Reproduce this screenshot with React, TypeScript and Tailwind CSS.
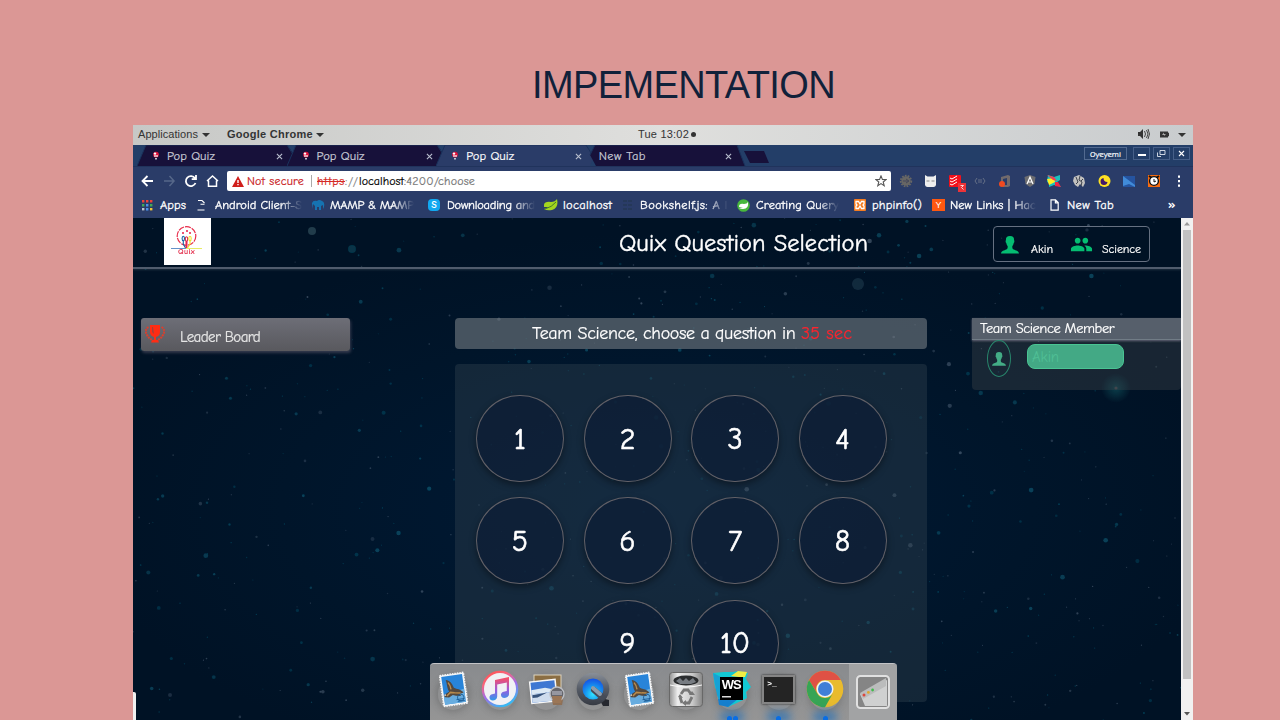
import { useLayoutEffect, useRef, useState } from "react";
import type { ReactNode } from "react";
import { MdGroup } from "react-icons/md";

/* Text set to an exact advance width by distributing letter spacing. */
function Fit({ w, children, className = "" }: { w: number; children: string; className?: string }) {
  const ref = useRef<HTMLSpanElement>(null);
  const [spacing, setSpacing] = useState(0);
  useLayoutEffect(() => {
    if (ref.current) {
      const natural = ref.current.getBoundingClientRect().width;
      setSpacing((w - natural) / children.length);
    }
  }, [w, children]);
  return (
    <span ref={ref} className={`inline-block shrink-0 whitespace-pre ${className}`} style={{ letterSpacing: spacing }}>
      {children}
    </span>
  );
}

const comic = "font-['Comic_Neue','Comic_Sans_MS',Lato,sans-serif]";

function Balloon() {
  return (
    <svg width="8" height="10" viewBox="0 0 8 10" className="block">
      <circle cx="4" cy="3.6" r="2.9" fill="#d9123c" />
      <circle cx="3" cy="2.6" r="1.2" fill="#fff" />
      <path d="M2 4.4h4v1.2H2z" fill="#fff" />
      <path d="M3.2 7h1.6v1.6H3.2z" fill="#e8e8f0" />
    </svg>
  );
}

function Tab({ title, w, active, blank }: { title: string; w: number; active?: boolean; blank?: boolean }) {
  return (
    <div className="relative h-[21px] w-[149.6px] shrink-0">
      <svg width="162" height="21" viewBox="0 0 162 21" className="absolute left-0 top-0">
        {blank ? (
          <path d="M9 0H151L159 21H10L4 10Z" fill="#17113a" />
        ) : (
          <path d="M0 21L9 0H150L158 11L154 21Z" fill={active ? "#2a3c68" : "#17113a"} />
        )}
        <path d={blank ? "M4 10L9 0H151L159 21" : "M0 21L9 0H150L157 11"} fill="none" stroke="#1a315b" />
      </svg>
      <div className={`relative flex h-[21px] items-center ${blank ? "pl-[13px]" : "pl-[15px]"}`}>
        {!blank && <div className="w-[15px]"><Balloon /></div>}
        <Fit w={w} className={`text-[12.5px] leading-[20px] [-webkit-text-stroke:0.2px_currentColor] ${active ? "text-white" : "text-[#c9cbd6]"}`}>{title}</Fit>
        <svg width="7" height="7" viewBox="0 0 7 7" className="absolute left-[139px] top-[8px]">
          <path d="M.9 .9L6.1 6.1M6.1 .9L.9 6.1" stroke="#b8bfce" strokeWidth="1.1" />
        </svg>
      </div>
    </div>
  );
}

function Mark({ width, iconWidth, icon, text, w, fade }: { width: string; iconWidth: string; icon: ReactNode; text: string; w: number; fade?: boolean }) {
  return (
    <div className={`flex h-[24px] shrink-0 items-center ${width}`}>
      <div className={`shrink-0 ${iconWidth}`}>{icon}</div>
      <Fit w={w} className={`text-[12.5px] leading-[24px] text-white [-webkit-text-stroke:0.3px_white] ${fade ? "mask-r-from-75% mask-r-to-100%" : ""}`}>{text}</Fit>
    </div>
  );
}

const Doc = () => (
  <svg width="9" height="12" viewBox="0 0 9 12"><path d="M1 .8h4.5L8.2 3.6v7.6H1zM5.4 .8v3h2.8" fill="none" stroke="#fff" strokeWidth="1.2" /></svg>
);

function Person({ size, color }: { size: number; color: string }) {
  return (
    <svg width={size} height={size} viewBox="0 0 18 18" className="block shrink-0">
      <path d="M9 0C6 0 4.8 1.4 4.9 4.2C4.4 4.5 4.5 6.5 5.3 6.9C5.6 8.6 6.3 9.6 6.7 10.2C6.7 12 6.5 13 5.3 13.6C3.2 14.6 .5 14.6 0 17.6H18C17.5 14.6 14.8 14.6 12.7 13.6C11.5 13 11.3 12 11.3 10.2C11.7 9.6 12.4 8.6 12.7 6.9C13.5 6.5 13.6 4.5 13.1 4.2C13.2 1.4 12 0 9 0Z" fill={color} />
    </svg>
  );
}

function makeStars() {
  let seed = 71;
  const next = () => {
    seed = (seed * 16807) % 2147483647;
    return seed / 2147483647;
  };
  return Array.from({ length: 700 }, () => ({
    x: next() * 1048, y: next() * 502, r: 0.6 + Math.pow(next(), 4) * 1.8, o: 0.18 + next() * 0.22, c: next() > 0.4 ? "#158aa5" : "#8194a8",
  }));
}
const stars = makeStars();

function Sky() {
  return (
    <svg width="1048" height="502" viewBox="0 0 1048 502" className="absolute left-0 top-0">
      <defs>
        <radialGradient id="sky" cx=".5" cy=".58" r=".55">
          <stop offset="0" stopColor="#001a36" /><stop offset=".65" stopColor="#00152a" /><stop offset="1" stopColor="#001225" />
        </radialGradient>
        <radialGradient id="flare"><stop stopColor="#1d8f8f" stopOpacity=".35" /><stop offset="1" stopColor="#1d8f8f" stopOpacity="0" /></radialGradient>
        <filter id="soft"><feGaussianBlur stdDeviation=".7" /></filter>
      </defs>
      <rect width="1048" height="502" fill="url(#sky)" />
      <g filter="url(#soft)">
        {stars.map((s, i) => <circle key={i} cx={s.x} cy={s.y} r={s.r} fill={s.c} opacity={s.o} />)}
        <circle cx="725" cy="66" r="6" fill="#3d6074" opacity=".3" />
        <circle cx="179" cy="13" r="4" fill="#426672" opacity=".5" />
        <circle cx="219" cy="31" r="4" fill="#12758a" opacity=".35" />
      </g>
      <circle cx="983" cy="170" r="15" fill="url(#flare)" />
      <circle cx="983" cy="170" r="1.6" fill="#a06060" opacity=".4" />
    </svg>
  );
}

function Circle({ n }: { n: number }) {
  return (
    <div className="flex h-[87px] w-[88px] items-center justify-center rounded-full border border-[#716c70]/85 bg-[#0d1e36]/80 pt-[2px] text-[30px] leading-[30px] text-white shadow-[0_3px_7px_rgba(0,0,0,0.4)] [-webkit-text-stroke:0.6px_white]">
      {n}
    </div>
  );
}

function Stamp() {
  return (
    <svg width="36" height="40" viewBox="0 0 36 40">
      <g transform="rotate(-8 18 20)">
        <rect x="6.5" y="5" width="24" height="31" fill="#f5f6f7" stroke="#f5f6f7" strokeWidth="1.6" strokeDasharray="1.5 1" />
        <rect x="8" y="6.5" width="21" height="28" fill="#2884d9" />
        <path d="M8 26L29 21V34.5H8Z" fill="#67acdf" />
        <path d="M12 10C16 11 18 14 19 19C22 21 25 21 28 25L24 26L25 28L20 27L17 26L13 28L9 27L8 25L12 23L14 22C12 19 13 14 12 10Z" fill="#54483e" />
        <path d="M14 13C16 16 16 18 16 20M11 26L15 23L19 24L25 25" fill="none" stroke="#b98b4c" strokeWidth="1.5" />
        <path d="M8 25l2-1v2z" fill="#eee" />
        <circle cx="24.5" cy="29.5" r="3.3" fill="none" stroke="#165994" strokeWidth=".8" />
        <path d="M20 31h8m-7 2h7" stroke="#165994" strokeWidth=".8" />
      </g>
    </svg>
  );
}

function Music() {
  return (
    <svg width="38" height="38" viewBox="0 0 38 38">
      <defs>
        <linearGradient id="ring" x1=".2" y1="0" x2=".7" y2="1"><stop stopColor="#ff504d" /><stop offset=".25" stopColor="#f9657d" /><stop offset=".55" stopColor="#a16be9" /><stop offset="1" stopColor="#28c4f4" /></linearGradient>
        <linearGradient id="note" x1="0" y1="0" x2="0" y2="1"><stop stopColor="#ff4e5d" /><stop offset=".55" stopColor="#9b5bdd" /><stop offset="1" stopColor="#2e9bea" /></linearGradient>
      </defs>
      <circle cx="19" cy="19" r="18.3" fill="url(#ring)" /><circle cx="19" cy="19" r="16" fill="#f1f1f5" />
      <path d="M14 10L28 7V24C28 28.5 20 29.5 20 25C20 22 23 21.5 25.8 21V12.5L16.2 14.5V26.5C16.2 31 8.5 32 8.5 27.5C8.5 24.5 11.5 24 14 23.5Z" fill="url(#note)" />
    </svg>
  );
}

function Preview() {
  return (
    <svg width="38" height="38" viewBox="0 0 38 38">
      <rect x="7" y="5" width="27" height="22" fill="#8b6e43" stroke="#ddd3bd" />
      <g transform="rotate(-6 16 22)">
        <rect x="3" y="10" width="27" height="23" fill="#f7f7f7" />
        <rect x="4.5" y="11.5" width="24" height="20" fill="#3e77d2" />
        <path d="M4.5 23h24v8.5h-24z" fill="#cedced" />
        <path d="M4.5 19l14-1 10 3v2h-24z" fill="#dce9f4" /><path d="M5 24l15-1-10 4H5z" fill="#37537b" />
      </g>
      <path d="M24 24h13l-2 11h-9z" fill="#8f7056" /><circle cx="30" cy="24" r="7" fill="#66666c" stroke="#bbbec3" strokeWidth="1.4" />
      <path d="M25 26h10l-1 7h-8z" fill="#9b7656" /><path d="M25 21h10v4H25z" fill="#9697a0" />
    </svg>
  );
}

function Quick() {
  return (
    <svg width="38" height="38" viewBox="0 0 38 38">
      <defs>
        <radialGradient id="qt" cx=".5" cy=".75" r=".7"><stop stopColor="#32e4ff" /><stop offset=".5" stopColor="#179af0" /><stop offset="1" stopColor="#1558e5" /></radialGradient>
        <linearGradient id="qr" x1="0" y1="0" x2="0" y2="1"><stop stopColor="#8a9099" /><stop offset=".5" stopColor="#555b66" /><stop offset="1" stopColor="#363a43" /></linearGradient>
      </defs>
      <path d="M24 27L35 30V36H29Z" fill="#26282f" />
      <circle cx="19" cy="19" r="16.3" fill="url(#qr)" />
      <circle cx="19" cy="19" r="10.5" fill="url(#qt)" /><path d="M20 20L28 27" stroke="#454b57" strokeWidth="6" strokeLinecap="round" />
      <path d="M19 18L26 24" stroke="#8d9cab" strokeWidth="4" strokeLinecap="round" />
    </svg>
  );
}

function Trash() {
  return (
    <svg width="38" height="38" viewBox="0 0 38 38">
      <defs><linearGradient id="bin"><stop stopColor="#929292" /><stop offset=".25" stopColor="#eeeeee" /><stop offset=".7" stopColor="#c8c8c8" /><stop offset="1" stopColor="#858585" /></linearGradient></defs>
      <rect x="2.5" y="2.5" width="33" height="34" rx="3" fill="url(#bin)" stroke="#686868" />
      <ellipse cx="19" cy="10.5" rx="12.5" ry="5" fill="#2b2d2f" /><path d="M9 11l4-3 3 3 3-3 3 3 4-3 3 4-5 2h-11z" fill="#777c82" />
      <path d="M3 15Q19 19 35 15" stroke="#f8f8f8" fill="none" />
      <g fill="none" stroke="#777" strokeWidth="2.8"><path d="M14 24l3-4h4l3 4M25 27l-3 6h-4M15 33l-2-6" /></g><path d="M22 25h6l-3-4zM19 30v6l-4-3zM11 27l5 1-3-4z" fill="#777" />
    </svg>
  );
}

function WebStorm() {
  return (
    <div className="relative h-[40px] w-[38px]">
      <svg width="38" height="40" viewBox="0 0 38 40" className="absolute">
        <path d="M0 4L11 3L20 3L25 2L35 4L33 10L38 18L33 23L34 29L28 32L15 38L7 34L5 25L2 18Z" fill="#12c9d3" />
        <path d="M0 4L8 8L7 35L4 26Z" fill="#17a1d4" /><path d="M18 7L25 2L34 3L32 8L26 8Z" fill="#f0ec43" /><path d="M5 30h20l-10 8-9-2z" fill="#167fce" />
        <path d="M7 8h23v23H7z" /><path d="M9 27h9v1.4H9z" fill="#ddd" />
      </svg>
      <span className="absolute left-[8.5px] top-[9px] font-['Liberation_Sans',sans-serif] text-[13px] leading-[14px] font-bold tracking-[-1px] text-white">WS</span>
    </div>
  );
}

function ChromeLogo() {
  return (
    <svg width="38" height="38" viewBox="0 0 38 38">
      <circle cx="19" cy="19" r="18.3" fill="#e9bb2d" />
      <path d="M3.1 10A18.3 18.3 0 0134.9 10H19A9 9 0 0011.2 23.5Z" fill="#df5145" />
      <path d="M3.1 10L11.2 23.5A9 9 0 0026.8 23.5L19 37.3A18.3 18.3 0 013.1 10Z" fill="#36a455" />
      <circle cx="19" cy="19" r="8.5" fill="#eef2f4" /><circle cx="19" cy="19" r="7" fill="#407fd7" />
    </svg>
  );
}

function Terminal() {
  return (
    <div className="relative h-[29px] w-[33px] border-2 border-[#858585] bg-[#242424] shadow-[0_0_2px_#222]">
      <span className="absolute left-[3px] top-[2px] font-['Liberation_Mono',monospace] text-[8px] leading-[9px] font-bold text-white">&gt;_</span>
    </div>
  );
}

function WindowIcon() {
  return (
    <svg width="34" height="34" viewBox="0 0 34 34">
      <rect x="1" y="1" width="32" height="32" rx="3.5" fill="#858585" stroke="#e1e1e1" strokeWidth="2" />
      <path d="M4 19L31 5V31H9Z" fill="#cfd0d0" /><path d="M4 18L30 3V11L7 24Z" fill="#bbbcbc" />
      <circle cx="8" cy="20" r="1.5" fill="#dc493d" /><circle cx="12.4" cy="17.4" r="1.4" fill="#dea82e" /><circle cx="16.6" cy="15" r="1.4" fill="#40bb4d" />
    </svg>
  );
}

function DockItem({ children, dots = 0, last }: { children: ReactNode; dots?: number; last?: boolean }) {
  return (
    <div className={`relative flex h-[56px] shrink-0 items-start justify-center pt-[5px] ${last ? "w-[48px] bg-[#a2a3a4]" : "w-[46.5px]"}`}>
      {!last && <div className="absolute bottom-[10px] left-[8px] h-[32px] w-[30px] rounded-full shadow-[0_0_7px_2px_rgba(65,65,65,0.3)]" />}
      <div className="relative flex h-[40px] items-center">{children}</div>
      {dots > 0 && (
        <div className="absolute bottom-[-1px] left-0 flex w-full justify-center gap-px">
          <div className="absolute bottom-[-1px] h-[10px] w-[24px] rounded-full bg-[#196dbe]/70 blur-[4px]" />
          {Array.from({ length: dots }, (_, i) => <div key={i} className="relative h-[5px] w-[5px] rounded-t-full bg-[#086de4]" />)}
        </div>
      )}
    </div>
  );
}

function ExtensionIcons() {
  return (
    <svg width="298" height="24" viewBox="0 0 298 24" className="shrink-0">
      <g transform="translate(12 12)"><circle r="4.7" fill="#676664" /><circle r="5.3" fill="none" stroke="#686765" strokeWidth="1.8" strokeDasharray="1.7 1.2" /><path d="M-3 0h5M0-2l3 2-3 2" stroke="#44475a" fill="none" /></g>
      <g transform="translate(36.5 12)"><path d="M-5.5-6L-3-4.5H3L5.5-6V4Q5 6 3 6H-3Q-5 6-5.5 4Z" fill="#eee" /><path d="M-4-1h3v2h-3zM1-1h3v2H1z" fill="#bbb" /></g>
      <g transform="translate(61 12)"><rect x="-6" y="-6" width="12" height="12" rx="1" fill="#f3101b" /><path d="M-5-3l2 1 5-3M-5 0l2 1 5-3M-5 3l2 1 5-3" stroke="#fff" fill="none" /><path d="M3 2h8v9H3z" fill="#ec3338" /><path d="M5.5 4.5h3l-2 2 2 2" stroke="#ffd2d2" fill="none" /></g>
      <g transform="translate(86 12)" stroke="#646f86" fill="none"><path d="M-3-3L-5 0L-3 3M3-3L5 0L3 3M-2-1h4M-2 1h4" /></g>
      <g transform="translate(111 12)"><path d="M-4-4L3-6L5-5V5L3 6H-2V4H2V-3L-2-2V2H-4Z" fill="#716a6c" /><circle cx="-3" cy="3" r="3" fill="#f14a20" /></g>
      <g transform="translate(136 12)"><path d="M0-6L5.5-4L4.5 3L0 6L-4.5 3L-5.5-4Z" fill="#6d6d70" /><path d="M-3 3L0-4L3 3M-2 1h4" stroke="#fff" strokeWidth="1.2" fill="none" /></g>
      <g transform="translate(160 12)"><path d="M-6-6L0-4L6-6V-1L3 1L7 6L0 4L-5 6V2L-7 1Z" fill="#1ac0bd" /><path d="M-7-2L0-3L1 1L-5 4Z" fill="#ffed23" /><path d="M-7-6L0-4L3 0L-1-1Z" fill="#ef4054" /><path d="M1 1L4 1L7 6L1 5Z" fill="#ef2544" /></g>
      <g transform="translate(185 12)"><path d="M-5-4L0-6L5-3L6 2L4 6L1 3L-1 6L-4 4L-6 0Z" fill="#c2c1bf" /><path d="M-3-4L-1 1L-3 3M1-5l-1 4 3 2-1 4M4-2L2 0" stroke="#3d424d" strokeWidth="1" fill="none" /></g>
      <g transform="translate(210.5 12)"><circle r="6" fill="#ffe123" /><path d="M-1-3A3.5 3.5 0 103 1A4 4 0 01-1-3" fill="#421a68" /></g>
      <g transform="translate(235 12)"><path d="M-6-5H6V6H-6Z" fill="#2554a0" /><path d="M-6-5L6 4V6L0 3L-6 5Z" fill="#418bd8" /></g>
      <g transform="translate(260 12)"><path d="M-6-6H6V6H-6Z" fill="#f66b0e" /><path d="M-5-5L-2-3M5-5L2-3" stroke="#111" strokeWidth="2" /><circle r="4.4" fill="#fff" stroke="#111" strokeWidth="1.4" /><path d="M0-2V1L2 0" stroke="#111" fill="none" /></g>
      <path d="M284 6.5h2v2.2h-2zm0 4.5h2v2.2h-2zm0 4.5h2v2.2h-2z" fill="#fff" />
    </svg>
  );
}

function Chrome() {
  return (
    <>
      <div className="relative flex h-[21px] shrink-0 bg-[#233e68] pl-[4px]">
        <Tab title="Pop Quiz" w={48} />
        <Tab title="Pop Quiz" w={48} />
        <Tab title="Pop Quiz" w={48} active />
        <Tab title="New Tab" w={47} blank />
        <svg width="28" height="14" viewBox="0 0 28 14" className="ml-[8px] mt-[5px] shrink-0"><path d="M1 1H21L26 13H7Z" fill="#17113a" /></svg>
        <div className="ml-auto flex gap-[6px] pr-[3px] pt-[2px]">
          <div className="flex h-[13px] w-[43px] items-center justify-center border border-[#526a90] text-white"><Fit w={31} className="text-[8.5px] leading-[10px] [-webkit-text-stroke:0.2px_white]">Oyeyemi</Fit></div>
          <div className="flex h-[13px] w-[17px] items-center justify-center border border-[#465f88]"><div className="mt-[3px] h-[2px] w-[8px] bg-white" /></div>
          <div className="ml-[-3px] flex h-[13px] w-[17px] items-center justify-center border border-[#465f88]"><svg width="9" height="7" viewBox="0 0 9 7"><path d="M3 .5h5v4H3zM.5 2.5v4h3.5" fill="none" stroke="#dfe5ef" strokeWidth=".9" /></svg></div>
          <div className="ml-[-3px] flex h-[13px] w-[17px] items-center justify-center border border-[#465f88]"><svg width="7" height="7" viewBox="0 0 7 7"><path d="M1 1L6 6M6 1L1 6" stroke="#fff" strokeWidth="1.1" /></svg></div>
        </div>
      </div>
      <div className="flex h-[27px] shrink-0 items-center border-t border-[#20335c] bg-[#2a3c68] pt-[2px]">
        <svg width="94" height="20" viewBox="0 0 94 20" className="shrink-0" fill="none" stroke="#fff" strokeWidth="1.8">
          <path d="M20 10H10M14.5 5L9.5 10L14.5 15" />
          <path d="M31 10H41M36.5 5L41 10L36.5 15" stroke="#566789" strokeWidth="1.5" />
          <path d="M62 7.2A5 5 0 1062.5 12M63 4V8.2H58.7" />
          <path d="M74 10L79.5 5L85 10M75.5 9.5V15.3H83.5V9.5" strokeWidth="1.5" />
        </svg>
        <div className="flex h-[20px] w-[664px] shrink-0 items-center rounded-[2px] bg-white pl-[5px] text-[12px] leading-[19px] [-webkit-text-stroke:0.2px_currentColor]">
          <svg width="12" height="11" viewBox="0 0 12 11" className="mr-[3px] shrink-0"><path d="M6 0L12 11H0Z" fill="#d01e1b" /><path d="M5.3 4h1.4v3H5.3zm0 4h1.4v1.3H5.3z" fill="#fff" /></svg>
          <Fit w={57} className="text-[#c9211e]">Not secure</Fit>
          <div className="ml-[7px] mr-[5px] h-[12px] w-px bg-[#aaa]" />
          <Fit w={28} className="text-[#d52a25] line-through decoration-1">https</Fit>
          <Fit w={14} className="text-[#888]">://</Fit>
          <Fit w={45} className="text-black">localhost</Fit>
          <Fit w={71} className="text-[#777]">:4200/choose</Fit>
          <svg width="12" height="12" viewBox="0 0 12 12" className="ml-auto mr-[4px]"><path d="M6 .9L7.4 4.4L11.1 4.6L8.2 7L9.2 10.7L6 8.6L2.8 10.7L3.8 7L.9 4.6L4.6 4.4Z" fill="none" stroke="#555" strokeWidth="1.1" /></svg>
        </div>
        <div className="ml-[3px] flex"><ExtensionIcons /></div>
      </div>
      <div className="flex h-[25px] shrink-0 overflow-hidden bg-[#2a3c68] pl-[9px]">
        <Mark width="w-[55px]" iconWidth="w-[18px]" text="Apps" w={26} icon={<svg width="11" height="11" viewBox="0 0 11 11"><path d="M0 0h2.4v2.4H0zM4 0h2.4v2.4H4zM8 0h2.4v2.4H8z" fill="#f04239" /><path d="M0 4h2.4v2.4H0zM8 4h2.4v2.4H8z" fill="#41a858" /><path d="M4 4h2.4v2.4H4zM4 8h2.4v2.4H4z" fill="#4d91eb" /><path d="M0 8h2.4v2.4H0z" fill="#bbc3cd" /><path d="M8 8h2.4v2.4H8z" fill="#f1c338" /></svg>} />
        <Mark width="w-[115px]" iconWidth="w-[18px]" text="Android Client-S" w={87} fade icon={<svg width="9" height="12" viewBox="0 0 9 12"><path d="M1 1.5h4l2.5 2.5M3.5 5.2H7.5M.5 11H7.5" fill="none" stroke="#fff" strokeWidth="1.1" /></svg>} />
        <Mark width="w-[116px]" iconWidth="w-[18px]" text="MAMP & MAMP" w={84} fade icon={<svg width="13" height="12" viewBox="0 0 13 12"><path d="M0 10V4Q1 1 5 2Q7 0 10 2Q13 3 12 8L11 10V6L9 7V11H7V8H5V11H3V7L1 5Z" fill="#1673b1" /></svg>} />
        <Mark width="w-[116px]" iconWidth="w-[19px]" text="Downloading and" w={88} fade icon={<div className="flex h-[12px] w-[12px] items-center justify-center rounded-[4px] bg-[#11a9f1] text-[10px] leading-[12px] font-black text-white">S</div>} />
        <Mark width="w-[79px]" iconWidth="w-[19px]" text="localhost" w={49} icon={<svg width="14" height="12" viewBox="0 0 14 12"><path d="M0 8Q-1 2 7 3Q11 3 13 0Q15 9 8 11Q3 12 0 10L5 8Z" fill="#a2d51f" /><path d="M1 10Q8 8 12 3" stroke="#447b29" fill="none" /></svg>} />
        <Mark width="w-[114px]" iconWidth="w-[17px]" text="Bookshelf.js: A l" w={88} fade icon={<svg width="9" height="10" viewBox="0 0 9 10"><path d="M0 1h4M5 1h4M0 5h4M5 5h4M0 9h4M5 9h4" stroke="#253859" strokeWidth="2" /></svg>} />
        <Mark width="w-[117px]" iconWidth="w-[19px]" text="Creating Query" w={83} fade icon={<svg width="13" height="13" viewBox="0 0 13 13"><circle cx="6.5" cy="6.5" r="6.3" fill="#48b83d" /><path d="M2 8Q2 4 7 5Q10 5 11 3Q12 10 6 10Q4 10 2 9L6 8Z" fill="#fff" /></svg>} />
        <Mark width="w-[78px]" iconWidth="w-[18px]" text="phpinfo()" w={50} icon={<svg width="12" height="12" viewBox="0 0 12 12"><rect width="12" height="12" rx="1" fill="#f47c20" /><path d="M2 2.5H4.5L6 5L7.5 2.5H10V5L9 6L10 7V9.5H7.5L6 7L4.5 9.5H2V7L3 6L2 5Z" fill="none" stroke="#fff" strokeWidth="1.3" /></svg>} />
        <Mark width="w-[118px]" iconWidth="w-[18px]" text="New Links | Hac" w={86} fade icon={<div className="h-[12px] w-[13px] bg-[#ff5810] text-center font-['Liberation_Sans',sans-serif] text-[9px] leading-[12px] text-white">Y</div>} />
        <Mark width="w-[122px]" iconWidth="w-[17px]" text="New Tab" w={47} icon={<Doc />} />
        <span className="ml-[-4px] text-[13px] leading-[23px] font-bold text-white">»</span>
      </div>
    </>
  );
}

export default function App() {
  return (
    <main className={`flex h-[720px] w-[1280px] flex-col overflow-hidden bg-[#db9795] pl-[133px] ${comic}`}>
      <h1 className="h-[125px] shrink-0 pl-[399px] pt-[63px] font-['Liberation_Sans',Arial,sans-serif] text-[38px] leading-[44px] text-[#11213a]"><Fit w={303}>IMPEMENTATION</Fit></h1>
      <div className="relative flex h-[595px] w-[1060px] shrink-0 flex-col overflow-hidden">
        <div className="grid h-[20px] shrink-0 grid-cols-3 items-center bg-linear-to-r from-[#c7c8c6] via-[#dfdfdd] to-[#c9ccce] px-[5px] pb-[2px] font-['Liberation_Sans',sans-serif] text-[11px] leading-[18px] text-[#343434]">
          <div className="flex items-center">
            <Fit w={60}>Applications</Fit><svg width="8" height="5" viewBox="0 0 8 5" className="ml-[4px] mr-[17px] mt-[2px]"><path d="M0 0h8L4 4z" fill="#333" /></svg>
            <Fit w={86} className="font-bold">Google Chrome</Fit><svg width="8" height="5" viewBox="0 0 8 5" className="ml-[3px] mt-[2px]"><path d="M0 0h8L4 4z" fill="#333" /></svg>
          </div>
          <div className="flex items-center justify-center pl-[8px]"><Fit w={51}>Tue 13:02</Fit><div className="ml-[2px] h-[5px] w-[5px] rounded-full bg-[#333]" /></div>
          <svg width="52" height="14" viewBox="0 0 52 14" className="ml-auto"><path d="M2 5h2l3-3v10L4 9H2z" fill="#333" /><path d="M8.5 4q2 3 0 6M10.5 3q3 4 0 8M12 2q3 5 0 10" stroke="#444" fill="none" /><path d="M24 4.5h8v1.2h1v3.6h-1v1.2h-8z" fill="#333" /><path d="M28 5.5L26 8h2v1L30 7H28z" fill="#aaa" /><path d="M42 6h8l-4 4z" fill="#333" /></svg>
        </div>
        <Chrome />
        <div className="flex h-[502px] shrink-0">
          <div className="relative h-[502px] w-[1048px] overflow-hidden">
            <Sky />
            <div className="relative flex h-[502px] flex-col">
              <header className="flex h-[51px] shrink-0 items-start border-b-2 border-[#505c6d] pl-[31px] shadow-[0_1px_2px_rgba(100,115,130,0.3)]">
                <div className="relative h-[47px] w-[47px] bg-white">
                  <svg width="47" height="47" viewBox="0 0 47 47" className="absolute"><circle cx="22.5" cy="18" r="9.3" fill="none" stroke="#e82d4b" strokeWidth="1.2" strokeDasharray="6 1" /><g fill="none" strokeWidth="1.1"><ellipse cx="19.3" cy="20.5" rx="1.2" ry="2.2" stroke="#1765a6" /><path d="M19.3 23V26L21.5 30" stroke="#1765a6" /><ellipse cx="22.5" cy="21" rx="1.2" ry="2.2" stroke="#da2848" /><path d="M22.5 23V31" stroke="#e5234f" strokeWidth="2" /><ellipse cx="26" cy="20.5" rx="1.2" ry="2.2" stroke="#efe229" /><path d="M26 23V26L23.5 30" stroke="#efe229" /></g><path d="M18 15h2m2-2h2m1 2h2" stroke="#e71d46" strokeWidth="1.3" /><path d="M7 30.5H22" stroke="#6592c9" /><path d="M22 30.5H38" stroke="#e7ec67" /></svg>
                  <span className="absolute left-[14px] top-[29.5px] text-[8px] leading-[8px] font-bold text-[#e22645]"><Fit w={17}>Quix</Fit></span>
                </div>
                <h2 className="ml-[408px] mt-[9px] text-[24.5px] leading-[33px] text-white [-webkit-text-stroke:0.4px_white]"><Fit w={249}>Quix Question Selection</Fit></h2>
                <div className="ml-[125px] mt-[8px] flex h-[36px] w-[157px] items-start rounded-[4px] border border-[#657081] pl-[7px] pt-[9px] text-[12px] text-white">
                  <Person size={18} color="#05bd72" />
                  <Fit w={22} className="ml-[12px] mt-[4px] leading-[18px] [-webkit-text-stroke:0.2px_white]">Akin</Fit>
                  <MdGroup className="ml-[17px] mt-[-3px] h-[23px] w-[23px] shrink-0 text-[#05bd72]" />
                  <Fit w={39} className="ml-[9px] mt-[4px] leading-[18px] [-webkit-text-stroke:0.2px_white]">Science</Fit>
                </div>
              </header>
              <div className="flex shrink-0 items-start pt-[49px]">
                <aside className="ml-[8px] flex h-[33px] w-[209px] rounded-[3px] bg-linear-to-b from-[#6d6e77] to-[#59595e] shadow-[1px_2px_3px_rgba(95,90,110,0.55)]">
                  <svg width="20" height="19" viewBox="0 0 20 19" className="ml-[4px] mt-[7px]"><path d="M5 0h10v7q0 4-4 5v3h2l1 2.5H6l1-2.5h2v-3Q5 11 5 7z" fill="#ff2c13" /><path d="M3.5 2Q-1 5 2 10Q4 14 8 15M16.5 2Q21 5 18 10Q16 14 12 15" fill="none" stroke="#d8402f" strokeWidth="2" strokeDasharray="2 .8" /><path d="M7 2h1l1 7-2-2z" fill="#a5403a" /></svg>
                  <Fit w={80} className="ml-[15px] mt-[8px] text-[15px] leading-[23px] text-[#e6e6e6] [-webkit-text-stroke:0.2px_#e6e6e6]">Leader Board</Fit>
                </aside>
                <section className="ml-[105px] w-[472px]">
                  <div className="flex h-[31px] justify-center rounded-[4px] bg-[#6c747d]/65 pl-[2px] text-[18px] leading-[32px] text-white [-webkit-text-stroke:0.2px_currentColor]">
                    <Fit w={269}>Team Science, choose a question in </Fit><Fit w={51} className="text-[#fb252e]">35 sec</Fit>
                  </div>
                  <div className="mt-[15px] flex h-[338px] w-[472px] flex-col items-start gap-[15.4px] rounded-[4px] bg-[#33434f]/40 pl-[21px] pt-[31px]">
                    <div className="flex gap-[19.5px]"><Circle n={1} /><Circle n={2} /><Circle n={3} /><Circle n={4} /></div>
                    <div className="flex gap-[19.5px]"><Circle n={5} /><Circle n={6} /><Circle n={7} /><Circle n={8} /></div>
                    <div className="ml-[107.5px] flex gap-[19.5px]"><Circle n={9} /><Circle n={10} /></div>
                  </div>
                </section>
                <aside className="ml-[45px] h-[72px] w-[209px] rounded-[4px] bg-[#3b4349]/40 text-white">
                  <div className="h-[22px] border-b border-[#717c86] bg-[#565f6b] pl-[8px] text-[14.5px] leading-[22px] shadow-[0_1px_2px_#667] [-webkit-text-stroke:0.2px_white]"><Fit w={134}>Team Science Member</Fit></div>
                  <div className="flex pl-[15px]">
                    <div className="flex h-[37px] w-[24px] items-center justify-center rounded-[50%] border border-[#28866c]"><Person size={14} color="#43ac86" /></div>
                    <div className="ml-[16px] mt-[4px] h-[25px] w-[97px] rounded-[8px] border border-[#4ac493] bg-[#43a985] pl-[4px] text-[15px] leading-[25px] text-[#50bf95]"><Fit w={27}>Akin</Fit></div>
                  </div>
                </aside>
              </div>
            </div>
            <div className="absolute bottom-0 left-0 h-[28px] w-[3px] rounded-tr-[2px] bg-[#f1f1f1]" />
          </div>
          <div className="flex h-[502px] w-[12px] flex-col items-center bg-[#f1f1f1]">
            <div className="flex h-[12px] items-center"><svg width="6" height="4" viewBox="0 0 6 4"><path d="M0 3.5h6L3 0z" fill="#999" /></svg></div>
            <div className="h-[449px] w-[8px] bg-[#c1c1c1]" />
            <svg width="6" height="4" viewBox="0 0 6 4" className="mt-auto mb-[4px]"><path d="M0 0h6L3 3.5z" fill="#555" /></svg>
          </div>
        </div>
        <div className="absolute bottom-0 left-[297px] flex h-[57px] w-[467px] overflow-hidden rounded-t-[4px] border-t border-[#c3c4c7] bg-linear-to-b from-[#8b8d90]/98 to-[#989898]/98">
          <DockItem><Stamp /></DockItem><DockItem><Music /></DockItem><DockItem><Preview /></DockItem><DockItem><Quick /></DockItem><DockItem><Stamp /></DockItem><DockItem><Trash /></DockItem>
          <DockItem dots={2}><WebStorm /></DockItem><DockItem dots={1}><Terminal /></DockItem><DockItem dots={1}><ChromeLogo /></DockItem><DockItem last><div className="mt-[5px]"><WindowIcon /></div></DockItem>
        </div>
      </div>
    </main>
  );
}
